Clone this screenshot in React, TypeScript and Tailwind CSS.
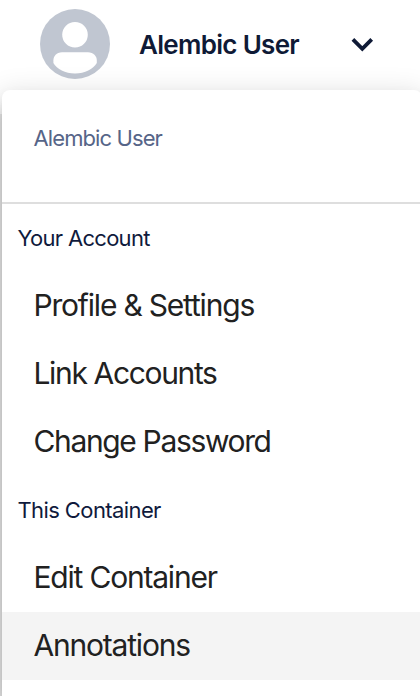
const sections = [
  {
    title: "Your Account",
    spacing: "tracking-[-0.7px]",
    items: [
      { label: "Profile & Settings", spacing: "tracking-[-1.2px]" },
      { label: "Link Accounts", spacing: "tracking-[-1.35px]" },
      { label: "Change Password", spacing: "tracking-[-1.35px]" },
    ],
  },
  {
    title: "This Container",
    spacing: "tracking-[-0.6px]",
    items: [
      { label: "Edit Container", spacing: "tracking-[-1.2px]" },
      { label: "Annotations", spacing: "tracking-[-1.2px]", active: true },
    ],
  },
];

function Avatar() {
  return (
    <svg width="70" height="70" viewBox="0 0 70 70" className="shrink-0">
      <circle cx="35" cy="35" r="35" fill="#c0c6d1" />
      <circle cx="35" cy="25.8" r="12.8" fill="#fff" />
      <path
        d="M22 43.3H48C53.5 43.3 56.8 47 56.8 51.5V54C53 60 45 64.5 35 64.5S17 60 13.4 54V51.5C13.4 47 16.5 43.3 22 43.3Z"
        fill="#fff"
      />
    </svg>
  );
}

export default function App() {
  return (
    <div className="flex h-[696px] w-[420px] flex-col overflow-hidden bg-white font-['Inter',sans-serif]">
      <header className="flex h-[90px] shrink-0 items-start pl-10 pt-[9px]">
        <Avatar />
        <div className="ml-[29px] flex h-[70px] w-[211px] items-center">
          <span className="text-[26px] font-semibold tracking-[-0.7px] whitespace-nowrap text-[#0f1a36]">
            Alembic User
          </span>
        </div>
        <svg width="25" height="16" viewBox="0 0 25 16" className="mt-[28px]">
          <path
            d="M2.9 2.4L12.3 11.8L21.7 2.4"
            fill="none"
            stroke="#0f1a36"
            strokeWidth="3.8"
          />
        </svg>
      </header>

      <div className="flex flex-1">
        <div className="mt-6 w-[2px] shrink-0 bg-[#ececec]" />
        <div className="relative w-[420px] shrink-0 rounded-t-lg bg-white shadow-[0_10px_10px_-6px_rgba(0,0,0,0.2),0_16px_20px_2px_rgba(0,0,0,0.14),0_6px_28px_4px_rgba(0,0,0,0.12)]">
          <div className="h-[114px] border-b-2 border-[#dedede] px-[31.5px] pt-8">
            <p className="text-[22px] leading-8 font-[370] tracking-[-0.9px] text-[#566588]">
              Alembic User
            </p>
          </div>

          {sections.map((section) => (
            <div key={section.title}>
              <h2
                className={`flex h-[68px] items-center px-[15.5px] text-[22px] font-[370] text-[#0f1a3c] ${section.spacing}`}
              >
                {section.title}
              </h2>
              <ul>
                {section.items.map((item) => (
                  <li
                    key={item.label}
                    className={`flex h-[68px] items-center px-[31.5px] pb-[2px] text-[30px] font-[370] text-[#212121] ${item.spacing} ${
                      item.active ? "bg-[#f4f4f4]" : ""
                    }`}
                  >
                    {item.label}
                  </li>
                ))}
              </ul>
            </div>
          ))}
        </div>
      </div>
    </div>
  );
}
